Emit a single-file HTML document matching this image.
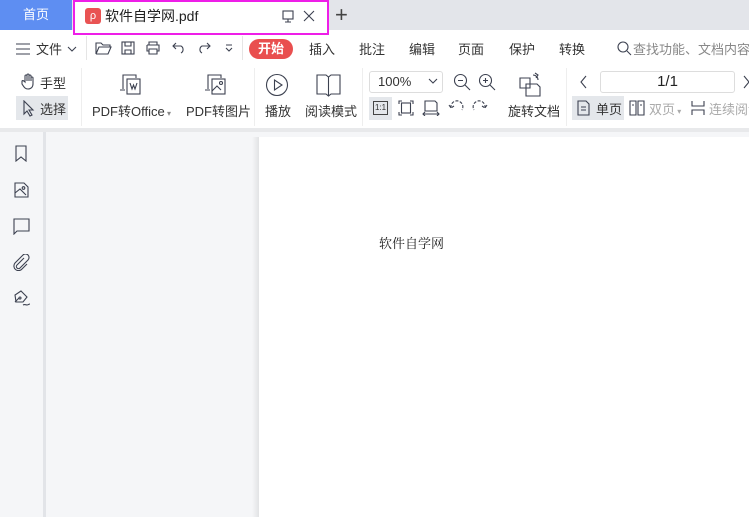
<!DOCTYPE html><html><head><meta charset="utf-8"><style>
*{margin:0;padding:0;box-sizing:border-box}
body{width:749px;height:517px;overflow:hidden;background:#f5f6f8;font-family:"Liberation Sans","Noto Sans CJK SC",sans-serif;color:#333;position:relative;font-size:13px}
.a{position:absolute;white-space:nowrap}
svg{position:absolute;fill:none;stroke:#3c4150;stroke-width:1.1}
</style></head><body>
<div class="a" style="left:0;top:0;width:749px;height:30px;background:#e3e5ea"></div>
<div class="a" style="left:0;top:0;width:72px;height:30px;background:#5e8ef2;color:#fff;text-align:center;line-height:30px">首页</div>
<div class="a" style="left:0;top:30px;width:749px;height:98px;background:#fff"></div>
<div class="a" style="left:73px;top:0;width:256px;height:35px;background:#fff;border:2px solid #ee1ee8"></div>
<div class="a" style="left:85px;top:8px;width:16px;height:16px;background:#e95353;border-radius:3px;color:#fff;font-size:11px;text-align:center;line-height:16px">ρ</div>
<div class="a" style="left:105px;top:6px;font-size:14px;color:#222">软件自学网.pdf</div>
<svg style="left:281px;top:9px" width="14" height="14" viewBox="0 0 14 14" stroke="#aaa"><rect x="2" y="2" width="10" height="8"/><path d="M7 10v3M4 13h6"/></svg>
<svg style="left:302px;top:9px" width="14" height="14" viewBox="0 0 14 14" stroke="#999"><path d="M2 2l10 10M12 2L2 12"/></svg>
<div class="a" style="left:335px;top:2px;font-size:22px;color:#444">+</div>
<svg style="left:15px;top:42px" width="16" height="14" viewBox="0 0 16 14"><path d="M1 2h14M1 7h14M1 12h14"/></svg>
<div class="a" style="left:36px;top:39px">文件</div>
<svg style="left:66px;top:44px" width="12" height="10" viewBox="0 0 12 10" stroke="#999"><path d="M2 3l4 4 4-4"/></svg>
<div class="a" style="left:86px;top:36px;width:1px;height:24px;background:#e5e5e5"></div>
<svg style="left:95px;top:41px" width="17" height="14" viewBox="0 0 17 14" stroke="#666"><path d="M1 2h5l2 2h7v2H4l-3 7V2zM4 6h12l-3 7H1"/></svg>
<svg style="left:121px;top:41px" width="14" height="14" viewBox="0 0 14 14" stroke="#ccc"><rect x="1" y="1" width="12" height="12"/><path d="M4 1v4h6V1M4 13V9h6v4"/></svg>
<svg style="left:145px;top:41px" width="16" height="14" viewBox="0 0 16 14" stroke="#333"><path d="M4 4V1h8v3M2 4h12v6h-2M4 10H2V4M4 8h8v5H4z"/></svg>
<svg style="left:172px;top:42px" width="14" height="12" viewBox="0 0 14 12" stroke="#ccc"><path d="M4 1L1 4l3 3M1 4h8a4 4 0 010 7"/></svg>
<svg style="left:197px;top:42px" width="14" height="12" viewBox="0 0 14 12" stroke="#ccc"><path d="M10 1l3 3-3 3M13 4H5a4 4 0 000 7"/></svg>
<svg style="left:224px;top:44px" width="10" height="10" viewBox="0 0 10 10" stroke="#444"><path d="M2 1h6M2 4l3 3 3-3"/></svg>
<div class="a" style="left:242px;top:36px;width:1px;height:24px;background:#e5e5e5"></div>
<div class="a" style="left:249px;top:39px;width:44px;height:20px;background:#e94f4f;border-radius:10px;color:#fff;text-align:center;line-height:20px;font-weight:bold">开始</div>
<div class="a" style="left:309px;top:39px">插入</div>
<div class="a" style="left:359px;top:39px">批注</div>
<div class="a" style="left:409px;top:39px">编辑</div>
<div class="a" style="left:458px;top:39px">页面</div>
<div class="a" style="left:509px;top:39px">保护</div>
<div class="a" style="left:559px;top:39px">转换</div>
<svg style="left:617px;top:41px" width="15" height="15" viewBox="0 0 15 15" stroke="#999"><circle cx="6" cy="6" r="5"/><path d="M10 10l4 4"/></svg>
<div class="a" style="left:633px;top:39px;color:#888">查找功能、文档内容</div>
<svg style="left:21px;top:73px" width="15" height="17" viewBox="0 0 15 17"><path d="M4 9V3a1 1 0 012 0v5V2a1 1 0 012 0v6V3a1 1 0 012 0v5V5a1 1 0 012 0v6c0 3-2 5-5 5s-4-2-6-5L1 8c1-1 2 0 3 1z"/></svg>
<div class="a" style="left:40px;top:73px">手型</div>
<div class="a" style="left:16px;top:96px;width:52px;height:24px;background:#e4e7eb"></div>
<svg style="left:22px;top:100px" width="14" height="17" viewBox="0 0 14 17"><path d="M2 1v13l3-3 3 5 2-1-3-5h4z"/></svg>
<div class="a" style="left:40px;top:99px">选择</div>
<div class="a" style="left:81px;top:68px;width:1px;height:58px;background:#eee"></div>
<svg style="left:118px;top:72px" width="24" height="24" viewBox="0 0 24 24"><path d="M5 17V3h13v3"/><rect x="9" y="7" width="13" height="15"/><path d="M12 11l2 6 1.5-4 1.5 4 2-6M2 18h5"/></svg>
<div class="a" style="left:92px;top:101px">PDF转Office<span style="font-size:8px;color:#888"> ▾</span></div>
<svg style="left:203px;top:72px" width="24" height="24" viewBox="0 0 24 24"><path d="M5 17V3h13v3"/><rect x="9" y="7" width="13" height="15"/><circle cx="18" cy="11" r="1.5"/><path d="M9 19l5-5 4 4M2 18h5"/></svg>
<div class="a" style="left:186px;top:101px">PDF转图片</div>
<div class="a" style="left:254px;top:68px;width:1px;height:58px;background:#eee"></div>
<svg style="left:265px;top:73px" width="24" height="24" viewBox="0 0 24 24"><circle cx="12" cy="12" r="10.5"/><path d="M9.5 7v10l7.5-5z"/></svg>
<div class="a" style="left:265px;top:101px">播放</div>
<svg style="left:316px;top:73px" width="25" height="24" viewBox="0 0 25 24"><path d="M1 2h9l2.5 2 2.5-2h9v19h-9l-2.5 2-2.5-2H1zM12.5 4v19"/></svg>
<div class="a" style="left:305px;top:101px">阅读模式</div>
<div class="a" style="left:362px;top:68px;width:1px;height:58px;background:#eee"></div>
<div class="a" style="left:369px;top:71px;width:74px;height:22px;border:1px solid #ddd;border-radius:3px;padding-left:8px;line-height:20px">100%</div>
<svg style="left:428px;top:77px" width="10" height="8" viewBox="0 0 10 8" stroke="#999"><path d="M1 2l4 4 4-4"/></svg>
<svg style="left:453px;top:73px" width="18" height="18" viewBox="0 0 18 18"><circle cx="7.5" cy="7.5" r="6"/><path d="M12 12l5 5M5 7.5h5"/></svg>
<svg style="left:478px;top:73px" width="18" height="18" viewBox="0 0 18 18"><circle cx="7.5" cy="7.5" r="6"/><path d="M12 12l5 5M5 7.5h5M7.5 5v5"/></svg>
<div class="a" style="left:369px;top:97px;width:23px;height:23px;background:#e4e7eb"></div>
<div class="a" style="left:373px;top:101px;width:15px;height:14px;border:1px solid #444;font-size:8px;text-align:center;line-height:12px">1:1</div>
<svg style="left:398px;top:100px" width="16" height="16" viewBox="0 0 16 16"><path d="M1 4V1h3M12 1h3v3M15 12v3h-3M4 15H1v-3"/><rect x="3.5" y="3" width="9" height="10"/></svg>
<svg style="left:422px;top:100px" width="18" height="16" viewBox="0 0 18 16"><path d="M3 1h10l2 2v8H3zM1 14h16M3 12l-2 2 2 2M15 12l2 2-2 2"/></svg>
<svg style="left:448px;top:100px" width="16" height="14" viewBox="0 0 16 14"><path d="M3 8a6 6 0 1111 2M1 5l2 3 3-2" stroke-dasharray="3 1.5"/></svg>
<svg style="left:472px;top:100px" width="16" height="14" viewBox="0 0 16 14"><path d="M13 8a6 6 0 10-11 2M15 5l-2 3-3-2" stroke-dasharray="3 1.5"/></svg>
<svg style="left:518px;top:72px" width="26" height="26" viewBox="0 0 26 26"><path d="M2 6h10v10H2zM8 12h11l3 3v9H8z"/><path d="M15 3a5 5 0 015 5M17 1l3 2-2 3"/></svg>
<div class="a" style="left:508px;top:101px">旋转文档</div>
<div class="a" style="left:566px;top:68px;width:1px;height:58px;background:#eee"></div>
<svg style="left:579px;top:75px" width="10" height="14" viewBox="0 0 10 14" stroke="#aaa"><path d="M7 1L2 7l5 6"/></svg>
<div class="a" style="left:600px;top:71px;width:135px;height:22px;border:1px solid #ddd;border-radius:3px;text-align:center;line-height:20px;font-size:15px;color:#222">1/1</div>
<svg style="left:742px;top:75px" width="10" height="14" viewBox="0 0 10 14" stroke="#aaa"><path d="M2 1l5 6-5 6"/></svg>
<div class="a" style="left:572px;top:96px;width:52px;height:24px;background:#e4e7eb"></div>
<svg style="left:577px;top:100px" width="13" height="16" viewBox="0 0 13 16"><path d="M1 1h8l3 3v11H1zM4 7h5M4 10h5"/></svg>
<div class="a" style="left:596px;top:99px">单页</div>
<svg style="left:629px;top:100px" width="16" height="16" viewBox="0 0 16 16" stroke="#bbb"><path d="M1 1h6v14H1zM9 1h6v14H9zM3 5h2M11 5h2"/></svg>
<div class="a" style="left:649px;top:99px;color:#aaa">双页<span style="font-size:8px"> ▾</span></div>
<svg style="left:691px;top:100px" width="14" height="16" viewBox="0 0 14 16" stroke="#bbb"><path d="M1 1v5h12V1M1 15v-5h12v5"/></svg>
<div class="a" style="left:709px;top:99px;color:#aaa">连续阅读</div>
<div class="a" style="left:0;top:128px;width:749px;height:4px;background:#e8e9eb"></div>
<div class="a" style="left:43px;top:132px;width:3px;height:385px;background:#e2e4e8"></div>
<svg style="left:15px;top:145px" width="12" height="17" viewBox="0 0 12 17"><path d="M1 1h10v15l-5-4-5 4z"/></svg>
<svg style="left:14px;top:182px" width="15" height="16" viewBox="0 0 15 16"><path d="M1 1h9l4 4v10H1zM1 11l5-4 6 6"/><circle cx="9.5" cy="6" r="1.3"/></svg>
<svg style="left:13px;top:218px" width="17" height="17" viewBox="0 0 17 17"><path d="M1 1h15v12H4l-3 3z"/></svg>
<svg style="left:13px;top:254px" width="17" height="17" viewBox="0 0 17 17"><path d="M11 4l-7 7a2 2 0 003 3l8-8a3 3 0 00-5-5L2 9a4.5 4.5 0 007 6l5-5"/></svg>
<svg style="left:13px;top:289px" width="18" height="18" viewBox="0 0 18 18"><path d="M8 2l6 6-4 5H3l-1-7zM2 13l4-4"/><circle cx="7" cy="9" r="1"/><path d="M10 16c2-1 3 0 4 0s2-1 3-1"/></svg>
<div class="a" style="left:252px;top:137px;width:8px;height:380px;background:linear-gradient(90deg,rgba(0,0,0,0),rgba(0,0,0,.09))"></div>
<div class="a" style="left:259px;top:137px;width:490px;height:380px;background:#fff"></div>
<div class="a" style="left:379px;top:233px;font-family:'Noto Serif CJK SC',serif;color:#222">软件自学网</div>
</body></html>
